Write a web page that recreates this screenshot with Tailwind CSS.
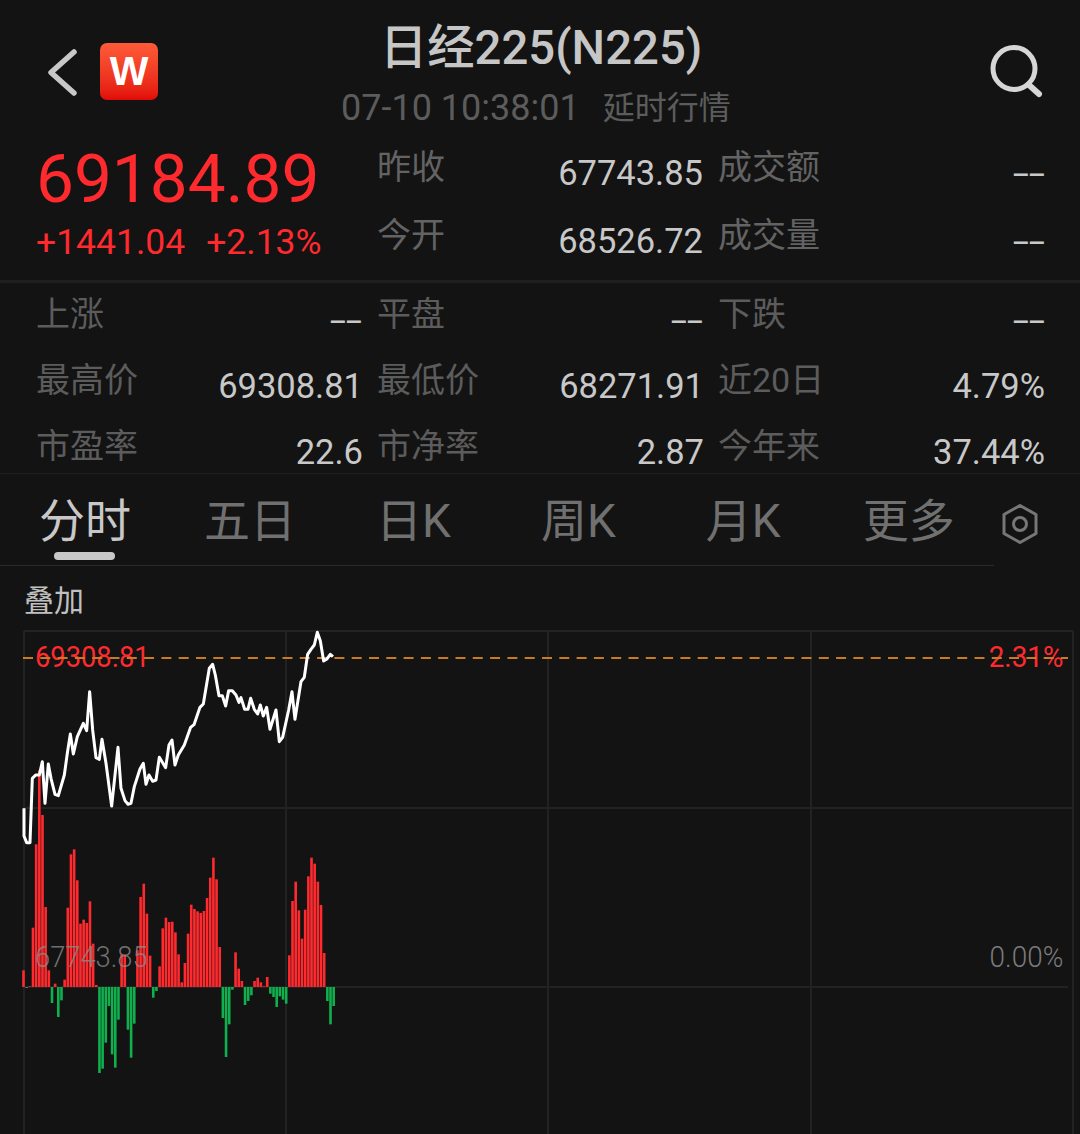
<!DOCTYPE html>
<html lang="zh-CN">
<head>
    <meta charset="UTF-8">
    <title>日经225(N225)</title>
    <script src="https://cdn.jsdelivr.net/npm/@tailwindcss/browser@4"></script>
</head>
<body class="bg-[#131313]">
<div class="w-[1080px] h-[1134px] overflow-hidden bg-[#131313] font-['Roboto','Noto_Sans_CJK_SC',sans-serif]">

    <!-- header -->
    <header class="flex h-[142px]">
        <div class="w-[340px] flex items-start">
            <svg class="mt-[46px] ml-[46px]" width="34" height="54" viewBox="46 46 34 54" fill="none"><path d="M74 52 L51 72.5 L74 93" stroke="#c8c8c8" stroke-width="5.5" stroke-linecap="round" stroke-linejoin="round"/></svg>
            <div class="mt-[43px] ml-[20px] w-[58px] h-[57px] rounded-[7px] bg-gradient-to-b from-[#ff5a38] to-[#e20808] flex items-center justify-center text-white text-[41px] leading-none font-bold font-['Liberation_Sans',sans-serif]">W</div>
        </div>
        <div class="flex-1 flex flex-col">
            <div class="ml-[40px] mt-[21px] h-[54px] text-[47.3px] leading-[54px] font-medium text-[#c6c6c6] whitespace-nowrap">日经225(N225)</div>
            <div class="ml-[1px] mt-[13px] flex items-center gap-[23px] text-[36px] leading-[40px] text-[#5c5c5c] whitespace-nowrap">
                <span>07-10 10:38:01</span><span class="text-[32px]">延时行情</span>
            </div>
        </div>
        <div class="w-[100px]">
            <svg class="mt-[42px] ml-[8px]" width="58" height="58" viewBox="0 0 58 58" fill="none"><circle cx="26" cy="26.5" r="21" stroke="#d6d6d6" stroke-width="5"/><path d="M41 43 L51 52" stroke="#d6d6d6" stroke-width="6" stroke-linecap="round"/></svg>
        </div>
    </header>

    <!-- quote -->
    <section class="grid grid-cols-[341px_341px_1fr] pl-[36px] pr-[35px] h-[138px] text-[34.5px] leading-[50px]">
        <div>
            <div class="mt-[4px] text-[67.5px] leading-[66px] text-[#ff2a2e] whitespace-nowrap">69184.89</div>
            <div class="mt-[5px] flex gap-[21px] text-[35.5px] leading-[50px] text-[#ff2a2e] whitespace-nowrap"><span>+1441.04</span><span>+2.13%</span></div>
        </div>
        <div class="flex flex-col gap-[12px]">
            <div class="flex justify-between"><span class="text-[34px] text-[#636363]">昨收</span><span class="pt-[6px] pr-[15px] text-[#c8c8c8]">67743.85</span></div>
            <div class="flex justify-between"><span class="text-[34px] text-[#636363]">今开</span><span class="pt-[6px] pr-[15px] text-[#c8c8c8]">68526.72</span></div>
        </div>
        <div class="flex flex-col gap-[12px]">
            <div class="flex justify-between"><span class="text-[34px] text-[#636363]">成交额</span><span class="pt-[6px] text-[#c8c8c8] inline-block scale-x-[1.7] origin-right">--</span></div>
            <div class="flex justify-between"><span class="text-[34px] text-[#636363]">成交量</span><span class="pt-[6px] text-[#c8c8c8] inline-block scale-x-[1.7] origin-right">--</span></div>
        </div>
    </section>

    <!-- stats -->
    <section class="border-t-[3px] border-b-[1px] border-[#1f1f1f] h-[194px] pt-[4px] pl-[36px] pr-[35px] grid grid-cols-[341px_341px_1fr] grid-rows-[54px_54px_54px] gap-y-[12px] text-[34.5px] leading-[54px]">
        <div class="flex justify-between pr-[15px]"><span class="text-[34px] text-[#5c5c5c]">上涨</span><span class="pt-[6px] text-[#c8c8c8] inline-block scale-x-[1.7] origin-right">--</span></div>
        <div class="flex justify-between pr-[15px]"><span class="text-[34px] text-[#5c5c5c]">平盘</span><span class="pt-[6px] text-[#c8c8c8] inline-block scale-x-[1.7] origin-right">--</span></div>
        <div class="flex justify-between"><span class="text-[34px] text-[#5c5c5c]">下跌</span><span class="pt-[6px] text-[#c8c8c8] inline-block scale-x-[1.7] origin-right">--</span></div>
        <div class="flex justify-between pr-[14px]"><span class="text-[34px] text-[#5c5c5c]">最高价</span><span class="pt-[6px] text-[#c8c8c8]">69308.81</span></div>
        <div class="flex justify-between pr-[14px]"><span class="text-[34px] text-[#5c5c5c]">最低价</span><span class="pt-[6px] text-[#c8c8c8]">68271.91</span></div>
        <div class="flex justify-between"><span class="text-[34px] text-[#5c5c5c]">近20日</span><span class="pt-[6px] text-[#c8c8c8]">4.79%</span></div>
        <div class="flex justify-between pr-[14px]"><span class="text-[34px] text-[#5c5c5c]">市盈率</span><span class="pt-[6px] text-[#c8c8c8]">22.6</span></div>
        <div class="flex justify-between pr-[14px]"><span class="text-[34px] text-[#5c5c5c]">市净率</span><span class="pt-[6px] text-[#c8c8c8]">2.87</span></div>
        <div class="flex justify-between"><span class="text-[34px] text-[#5c5c5c]">今年来</span><span class="pt-[6px] text-[#c8c8c8]">37.44%</span></div>
    </section>

    <!-- tabs -->
    <nav class="relative h-[92px] flex items-start">
        <div class="w-[994px] h-[92px] border-b border-[#2a2a2a] pl-[39px] pt-[23px] flex gap-[73px] text-[46px] leading-[48px] text-[#707070] whitespace-nowrap">
            <span class="text-[#c8c8c8]">分时</span>
            <span>五日</span>
            <span class="ml-[7px]">日K</span>
            <span class="ml-[17px]">周K</span>
            <span class="ml-[17px]">月K</span>
            <span class="ml-[9px]">更多</span>
        </div>
        <svg class="mt-[29px] ml-[7px]" width="38" height="42" viewBox="0 0 38 42" fill="none"><path d="M19 2.5 L35 11.5 L35 30.5 L19 39.5 L3 30.5 L3 11.5 Z" stroke="#777777" stroke-width="3" stroke-linejoin="round"/><circle cx="19" cy="21" r="6.5" stroke="#777777" stroke-width="3"/></svg>
        <div class="absolute left-[54px] top-[78px] w-[61px] h-[8px] rounded-full bg-[#c8c8c8]"></div>
    </nav>

    <!-- chart -->
    <section class="relative h-[568px]">
        <div class="pl-[24px] pt-[17px] text-[30px] leading-[36px] text-[#c0c0c0]">叠加</div>
        <svg id="chart" class="absolute left-0 top-0" width="1080" height="568" viewBox="0 566 1080 568" fill="none">
            <g stroke="#222222" stroke-width="2">
                <path d="M24 631 H1073 M24 808 H1073 M24 631 V1134 M286 631 V1134 M548 631 V1134 M811 631 V1134 M1073 631 V1134 M24 987 H1068"/>
            </g>
            <g id="bars"></g>
        </svg>
        <div class="absolute left-[35px] top-[73px] text-[30px] leading-[36px] text-[#ff2a2e] scale-x-[0.91] origin-left">69308.81</div>
        <div class="absolute right-[17px] top-[73px] text-[30px] leading-[36px] text-[#ff2a2e] scale-x-[0.93] origin-right">2.31%</div>
        <div class="absolute left-[35px] top-[373px] text-[30px] leading-[36px] font-light text-[#8a8a8a]/80 scale-x-[0.91] origin-left">67743.85</div>
        <div class="absolute right-[17px] top-[373px] text-[30px] leading-[36px] font-light text-[#7a7a7a] scale-x-[0.93] origin-right">0.00%</div>
        <svg class="absolute left-0 top-0" width="1080" height="568" viewBox="0 566 1080 568" fill="none">
            <path d="M23 658 H1068" stroke="#c97a22" stroke-width="2" stroke-dasharray="10 7.3"/>
            <path transform="translate(0 620) scale(0.3333)" stroke="#ffffff" stroke-width="9" stroke-linejoin="round" d="M72 565 72 648 80 668 90 668 97 475 107 465 118 465 127 425 135 550 145 432 153 475 165 523 175 527 193 465 202 400 211 342 220 402 232 350 250 310 260 332 269 215 278 330 288 413 298 418 306 358 318 430 335 558 354 382 363 505 375 542 384 553 393 550 403 500 420 447 430 430 438 493 447 465 458 484 468 480 478 412 497 443 507 375 516 360 525 435 535 405 553 375 572 322 582 314 600 262 610 252 628 145 638 133 646 165 657 227 667 227 677 258 686 212 697 212 708 225 717 247 723 233 734 268 744 268 752 235 763 268 773 282 781 255 790 288 800 262 810 328 828 270 838 365 848 352 866 270 876 215 885 298 903 185 913 172 923 103 933 88 943 75 952 37 961 62 971 123 981 117 991 103 999 110"/>
        </svg>
    </section>
</div>

<script>
    // volume bars, heights in px * 3, minus = green
    const volumes = [50,-3,2,178,428,650,516,240,50,-48,10,-90,-40,22,238,398,413,320,190,202,192,257,130,6,
        -258,-245,-167,-57,-202,-242,-98,97,97,-128,-212,-110,110,270,310,220,94,-32,-12,62,176,208,195,196,164,98,14,72,
        160,247,234,227,222,228,267,328,388,323,120,-93,-210,-112,-8,104,55,18,-54,-42,-25,18,28,14,2,30,
        -20,-30,-60,-28,-38,-50,95,258,316,230,145,232,332,388,370,316,246,102,-42,-112,-57];
    const bars = document.getElementById('bars');
    let rects = '';
    volumes.forEach((v, i) => {
        const x = 22.2 + i * 3.165;
        const h = Math.abs(v) / 3;
        const y = v > 0 ? 987 - h : 987;
        rects += `<rect x="${x}" y="${y}" width="2.6" height="${h}" fill="${v > 0 ? '#ff2a2e' : '#10b04e'}"/>`;
    });
    bars.innerHTML = rects;
</script>
</body>
</html>
